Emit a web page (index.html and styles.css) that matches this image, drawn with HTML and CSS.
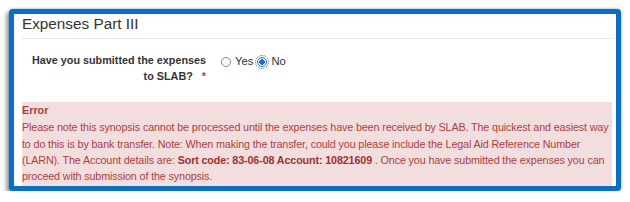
FILE: index.html
```html
<!DOCTYPE html>
<html lang="en">
<head>
  <meta charset="UTF-8" />
  <title>Expenses Part III</title>
  <link rel="stylesheet" href="styles.css">
</head>
<body>
  <div class="frame">
    <h4 class="section-title">Expenses Part III</h4>
    <hr class="divider">

    <div class="form-row">
      <label class="form-label">Have you submitted the expenses to SLAB?<span class="required">*</span></label>
      <div class="radio-group">
        <label class="radio"><span class="radio-mark"></span>Yes</label>
        <label class="radio"><span class="radio-mark checked"></span>No</label>
      </div>
    </div>

    <div class="error-box">
      <div class="error-title">Error</div>
      <p class="error-text">Please note this synopsis cannot be processed until the expenses have been received by SLAB. The quickest and easiest way to do this is by bank transfer. Note: When making the transfer, could you please include the Legal Aid Reference Number (LARN). The Account details are: <b>Sort code: 83-06-08 Account: 10821609</b> . Once you have submitted the expenses you can proceed with submission of the synopsis.</p>
    </div>
  </div>
</body>
</html>
```

FILE: styles.css
```css
body {
  margin: 0;
  padding: 9px 0 0 9px;
  background: #fff;
  font-family: "Liberation Sans", Arial, sans-serif;
  font-size: 10.8px;
  line-height: 15.8px;
  color: #333;
}

.frame {
  width: 590px;
  height: 170px;
  padding: 2px 4px 0 8px;
  border: 5px solid #0b6fc1;
  border-radius: 4px;
  background: #fff;
  overflow: hidden;
  box-shadow: -3px 3px 4px rgba(0, 0, 0, 0.35), 0 0 3px rgba(0, 90, 170, 0.5);
}

.section-title {
  margin: 0;
  font-size: 15.3px;
  line-height: 16.8px;
  font-weight: normal;
  color: #333;
}

.divider {
  margin: 5px 0 0;
  border: 0;
  border-top: 1px solid #e5e5e5;
}

.form-row {
  display: flex;
  margin-top: 14px;
}

.form-label {
  width: 184px;
  text-align: right;
  font-weight: bold;
  color: #333;
}

.required {
  margin-left: 9px;
  color: #e0332a;
}

.radio-group {
  display: flex;
  align-items: flex-start;
  margin-left: 15px;
  padding-top: 1px;
}

.radio {
  display: flex;
  align-items: center;
  margin-right: 4px;
  color: #333;
  font-size: 11.3px;
}

.radio-mark {
  box-sizing: border-box;
  width: 10px;
  height: 10px;
  margin-right: 4px;
  border: 1px solid #868686;
  border-radius: 50%;
  background: #fff;
}

.radio-mark.checked {
  border-color: #1a6fd6;
  background: radial-gradient(circle, #1a6fd6 0 2.6px, #fff 3px);
  outline: 1px dotted #666;
  outline-offset: 1px;
}

.error-box {
  margin-top: 18px;
  height: 90px;
  background: #f2dede;
  color: #b0403e;
}

.error-title {
  font-weight: bold;
  color: #a9403d;
  padding-top: 1px;
}

.error-text {
  margin: 0;
  font-size: 10.75px;
  line-height: 16.4px;
  letter-spacing: -0.13px;
}

.error-text b {
  color: #a52f2d;
}
```
